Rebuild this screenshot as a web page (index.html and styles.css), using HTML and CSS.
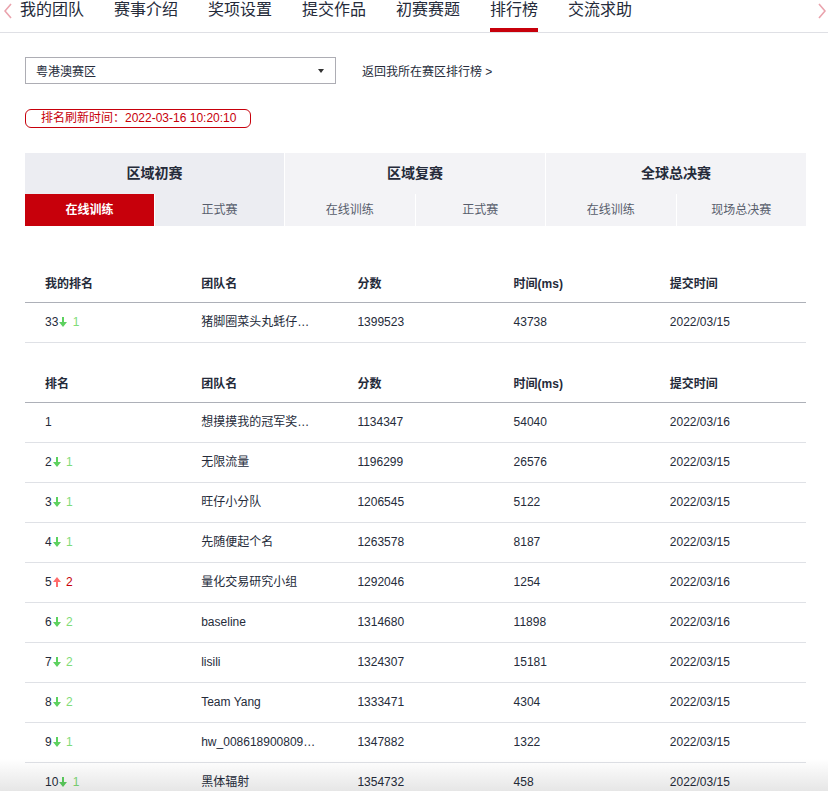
FILE: index.html
```html
<!DOCTYPE html>
<html lang="zh-CN">
<head>
<meta charset="utf-8">
<title>排行榜</title>
<link rel="stylesheet" href="styles.css">
</head>
<body>
<nav class="nav">
  <span class="chev chev-left"><svg width="8" height="16" viewBox="0 0 8 16"><polyline points="7,1 1,8 7,15" fill="none" stroke="#eaa3ad" stroke-width="1.6"/></svg></span>
  <div class="nav-items">
    <a class="nav-item">我的团队</a>
    <a class="nav-item">赛事介绍</a>
    <a class="nav-item">奖项设置</a>
    <a class="nav-item">提交作品</a>
    <a class="nav-item">初赛赛题</a>
    <a class="nav-item active">排行榜</a>
    <a class="nav-item">交流求助</a>
  </div>
  <span class="chev chev-right"><svg width="8" height="16" viewBox="0 0 8 16"><polyline points="1,1 7,8 1,15" fill="none" stroke="#eaa3ad" stroke-width="1.6"/></svg></span>
</nav>

<main class="main">
  <div class="filter-row">
    <div class="select">
      <span>粤港澳赛区</span>
      <span class="caret"></span>
    </div>
    <a class="back-link">返回我所在赛区排行榜 &gt;</a>
  </div>

  <div class="refresh">排名刷新时间：2022-03-16 10:20:10</div>

  <div class="stages">
    <div class="stage stage-current">
      <div class="stage-title">区域初赛</div>
      <div class="subtabs">
        <div class="subtab active">在线训练</div>
        <div class="subtab">正式赛</div>
      </div>
    </div>
    <div class="stage">
      <div class="stage-title">区域复赛</div>
      <div class="subtabs">
        <div class="subtab">在线训练</div>
        <div class="subtab">正式赛</div>
      </div>
    </div>
    <div class="stage">
      <div class="stage-title">全球总决赛</div>
      <div class="subtabs">
        <div class="subtab">在线训练</div>
        <div class="subtab">现场总决赛</div>
      </div>
    </div>
  </div>

  <div class="table my-table">
    <div class="row head">
      <div class="cell">我的排名</div><div class="cell">团队名</div><div class="cell">分数</div><div class="cell">时间(ms)</div><div class="cell">提交时间</div>
    </div>
    <div class="row">
      <div class="cell">33<svg class="arr down" width="8" height="10" viewBox="0 0 8 10"><path d="M3 0h2v5h3L4 10 0 5h3z"/></svg> <span class="chg down">1</span></div>
      <div class="cell">猪脚圈菜头丸蚝仔煎饼队</div><div class="cell">1399523</div><div class="cell">43738</div><div class="cell">2022/03/15</div>
    </div>
  </div>

  <div class="table rank-table">
    <div class="row head">
      <div class="cell">排名</div><div class="cell">团队名</div><div class="cell">分数</div><div class="cell">时间(ms)</div><div class="cell">提交时间</div>
    </div>
    <div class="row">
      <div class="cell">1</div>
      <div class="cell">想摸摸我的冠军奖杯呀</div><div class="cell">1134347</div><div class="cell">54040</div><div class="cell">2022/03/16</div>
    </div>
    <div class="row">
      <div class="cell">2<svg class="arr down" width="8" height="10" viewBox="0 0 8 10"><path d="M3 0h2v5h3L4 10 0 5h3z"/></svg> <span class="chg down">1</span></div>
      <div class="cell">无限流量</div><div class="cell">1196299</div><div class="cell">26576</div><div class="cell">2022/03/15</div>
    </div>
    <div class="row">
      <div class="cell">3<svg class="arr down" width="8" height="10" viewBox="0 0 8 10"><path d="M3 0h2v5h3L4 10 0 5h3z"/></svg> <span class="chg down">1</span></div>
      <div class="cell">旺仔小分队</div><div class="cell">1206545</div><div class="cell">5122</div><div class="cell">2022/03/15</div>
    </div>
    <div class="row">
      <div class="cell">4<svg class="arr down" width="8" height="10" viewBox="0 0 8 10"><path d="M3 0h2v5h3L4 10 0 5h3z"/></svg> <span class="chg down">1</span></div>
      <div class="cell">先随便起个名</div><div class="cell">1263578</div><div class="cell">8187</div><div class="cell">2022/03/15</div>
    </div>
    <div class="row">
      <div class="cell">5<svg class="arr up" width="8" height="10" viewBox="0 0 8 10"><path d="M3 10h2V5h3L4 0 0 5h3z"/></svg> <span class="chg up">2</span></div>
      <div class="cell">量化交易研究小组</div><div class="cell">1292046</div><div class="cell">1254</div><div class="cell">2022/03/16</div>
    </div>
    <div class="row">
      <div class="cell">6<svg class="arr down" width="8" height="10" viewBox="0 0 8 10"><path d="M3 0h2v5h3L4 10 0 5h3z"/></svg> <span class="chg down">2</span></div>
      <div class="cell">baseline</div><div class="cell">1314680</div><div class="cell">11898</div><div class="cell">2022/03/16</div>
    </div>
    <div class="row">
      <div class="cell">7<svg class="arr down" width="8" height="10" viewBox="0 0 8 10"><path d="M3 0h2v5h3L4 10 0 5h3z"/></svg> <span class="chg down">2</span></div>
      <div class="cell">lisili</div><div class="cell">1324307</div><div class="cell">15181</div><div class="cell">2022/03/15</div>
    </div>
    <div class="row">
      <div class="cell">8<svg class="arr down" width="8" height="10" viewBox="0 0 8 10"><path d="M3 0h2v5h3L4 10 0 5h3z"/></svg> <span class="chg down">2</span></div>
      <div class="cell">Team Yang</div><div class="cell">1333471</div><div class="cell">4304</div><div class="cell">2022/03/15</div>
    </div>
    <div class="row">
      <div class="cell">9<svg class="arr down" width="8" height="10" viewBox="0 0 8 10"><path d="M3 0h2v5h3L4 10 0 5h3z"/></svg> <span class="chg down">1</span></div>
      <div class="cell">hw_0086189008091234</div><div class="cell">1347882</div><div class="cell">1322</div><div class="cell">2022/03/15</div>
    </div>
    <div class="row">
      <div class="cell">10<svg class="arr down" width="8" height="10" viewBox="0 0 8 10"><path d="M3 0h2v5h3L4 10 0 5h3z"/></svg> <span class="chg down">1</span></div>
      <div class="cell">黑体辐射</div><div class="cell">1354732</div><div class="cell">458</div><div class="cell">2022/03/15</div>
    </div>
  </div>
</main>
<div class="bottom-fade"></div>
</body>
</html>
```

FILE: styles.css
```css
* { box-sizing: border-box; }

body {
  margin: 0;
  background: #fff;
  color: #252b3a;
  font-family: "Liberation Sans", Arial, "Noto Sans CJK SC", sans-serif;
  font-size: 12px;
}

a { color: inherit; text-decoration: none; }

/* nav */
.nav {
  display: flex;
  align-items: flex-start;
  height: 33px;
  border-bottom: 1px solid #dfe0e5;
  padding: 0 2px 0 4px;
}
.chev { display: block; height: 20px; padding-top: 3px; line-height: 0; }
.chev-right { margin-left: auto; }
.nav-items {
  display: flex;
  gap: 30px;
  margin-left: 8px;
}
.nav-item {
  display: block;
  height: 32px;
  font-size: 16px;
  line-height: 20px;
  color: #252b3a;
  white-space: nowrap;
}
.nav-item.active {
  border-bottom: 4px solid #c7000b;
}

/* main */
.main {
  width: 781px;
  margin-left: 25px;
}

.filter-row {
  display: flex;
  align-items: center;
  margin-top: 24px;
}
.select {
  width: 311px;
  height: 27px;
  border: 1px solid #adadb4;
  display: flex;
  align-items: center;
  justify-content: space-between;
  padding: 0 11px 0 10px;
  color: #252b3a;
}
.caret {
  width: 0;
  height: 0;
  border-left: 3.5px solid transparent;
  border-right: 3.5px solid transparent;
  border-top: 4px solid #333;
  margin-top: 1px;
}
.back-link {
  margin-left: 26px;
  color: #252b3a;
}

.refresh {
  display: inline-block;
  margin-top: 25px;
  width: 226px;
  height: 19px;
  line-height: 17px;
  border: 1px solid #c7000b;
  border-radius: 6px;
  color: #c7000b;
  padding-left: 15px;
}

/* stages */
.stages {
  margin-top: 25px;
  display: grid;
  grid-template-columns: 259px 260px 260px;
  gap: 1px;
}
.stage { background: #f3f3f6; }
.stage-current { background: #ecedf2; }
.stage-title {
  height: 41px;
  line-height: 41px;
  text-align: center;
  font-size: 14px;
  font-weight: bold;
  color: #252b3a;
}
.subtabs {
  display: grid;
  grid-template-columns: 1fr 1fr;
  gap: 1px;
  background: #fff;
}
.subtab {
  height: 32px;
  line-height: 32px;
  text-align: center;
  color: #575d6c;
  background: #f3f3f6;
}
.stage-current .subtab { background: #ecedf2; }
.stage-current .subtab.active,
.subtab.active {
  background: #c7000b;
  color: #fff;
  font-weight: bold;
}

/* tables */
.table { width: 781px; }
.my-table { margin-top: 39px; }
.rank-table { margin-top: 22px; }
.row {
  display: grid;
  grid-template-columns: repeat(5, 1fr);
  height: 40px;
  padding-bottom: 2px;
  border-bottom: 1px solid #dfe1e6;
  align-items: center;
}
.row.head {
  height: 38px;
  padding-bottom: 0;
  border-bottom: 1px solid #adb0b8;
  font-weight: bold;
}
.cell {
  padding: 0 20px;
  white-space: nowrap;
  overflow: hidden;
  text-overflow: ellipsis;
  line-height: 16px;
}
.arr { vertical-align: -1px; margin-left: 1px; margin-right: 2px; }
.arr.down { fill: #5dd15f; }
.arr.up { fill: #ff6b6b; }
.chg.down { color: #7fdc78; }
.chg.up { color: #c7000b; }

.bottom-fade {
  position: fixed;
  left: 0;
  right: 0;
  bottom: 0;
  height: 32px;
  pointer-events: none;
  background: linear-gradient(#ffffff, #e6e6e6);
  mix-blend-mode: multiply;
}
```
